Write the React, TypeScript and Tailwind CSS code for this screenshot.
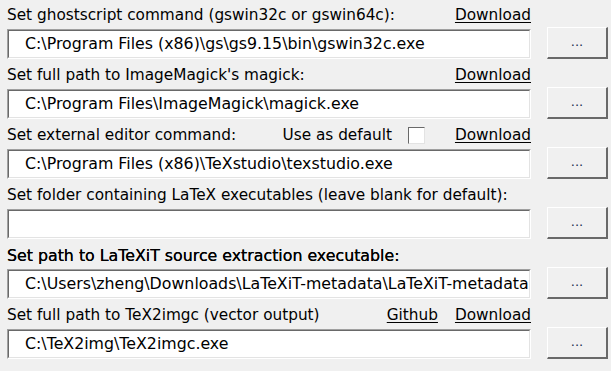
import React from "react";

type Row = {
  label: string;
  value: string;
  links?: string[];
  useDefault?: boolean;
  strong?: boolean;
};

const rows: Row[] = [
  {
    label: "Set ghostscript command (gswin32c or gswin64c):",
    value: "C:\\Program Files (x86)\\gs\\gs9.15\\bin\\gswin32c.exe",
    links: ["Download"],
  },
  {
    label: "Set full path to ImageMagick's magick:",
    value: "C:\\Program Files\\ImageMagick\\magick.exe",
    links: ["Download"],
  },
  {
    label: "Set external editor command:",
    value: "C:\\Program Files (x86)\\TeXstudio\\texstudio.exe",
    links: ["Download"],
    useDefault: true,
  },
  {
    label: "Set folder containing LaTeX executables (leave blank for default):",
    value: "",
  },
  {
    label: "Set path to LaTeXiT source extraction executable:",
    value: "C:\\Users\\zheng\\Downloads\\LaTeXiT-metadata\\LaTeXiT-metadata-win.exe",
    strong: true,
  },
  {
    label: "Set full path to TeX2imgc (vector output)",
    value: "C:\\TeX2img\\TeX2imgc.exe",
    links: ["Github", "Download"],
  },
];

function Edit({ value }: { value: string }) {
  return (
    <div className="mt-[2px] h-[30px] w-[524px] border-t border-l border-t-[#a0a0a0] border-l-[#a0a0a0] border-b border-r border-b-white border-r-white">
      <div className="h-full w-full overflow-hidden border-t border-l border-t-[#696969] border-l-[#696969] border-b border-r border-b-[#e3e3e3] border-r-[#e3e3e3] bg-white">
        <div className="overflow-hidden pl-[16px] pt-[3px] whitespace-nowrap text-[15.8px] leading-[20px] text-black">
          {value}
        </div>
      </div>
    </div>
  );
}

function Browse() {
  return (
    <div className="ml-[16px] h-[32px] w-[61px] border-t border-l border-t-white border-l-white border-b-2 border-r-2 border-b-[#696969] border-r-[#696969]">
      <div className="flex h-full w-full items-center justify-center bg-[#f0f0f0] pb-[1px] text-[13px] text-[#1e3050]">
        ...
      </div>
    </div>
  );
}

export default function App() {
  return (
    <div
      className="h-[371px] w-[611px] overflow-hidden bg-[#f0f0f0] pl-[7px] text-black"
      style={{ fontFamily: '"DejaVu Sans", Verdana, sans-serif' }}
    >
      {rows.map((r, i) => (
        <div key={i} className="flex h-[60px] flex-col">
          <div className="flex h-[27px] w-[524px] items-end pb-[2px] text-[15.3px] leading-[19px]">
            <span className={r.strong ? "text-[15.8px] [text-shadow:0_0_0.5px_#000]" : ""}>
              {r.label}
            </span>
            <div className="flex-1" />
            {r.useDefault && (
              <div className="mr-[30px] flex items-center">
                <span>Use as default</span>
                <div className="ml-[16px] mb-[1px] h-[17px] w-[17px] border border-t-[#696969] border-l-[#696969] border-b-[#e3e3e3] border-r-[#e3e3e3] bg-white" />
              </div>
            )}
            {r.links?.map((l, j) => (
              <span key={l} className={"underline underline-offset-2 " + (j > 0 ? "ml-[17px]" : "")}>
                {l}
              </span>
            ))}
          </div>
          <div className="flex items-start">
            <Edit value={r.value} />
            <Browse />
          </div>
        </div>
      ))}
    </div>
  );
}
